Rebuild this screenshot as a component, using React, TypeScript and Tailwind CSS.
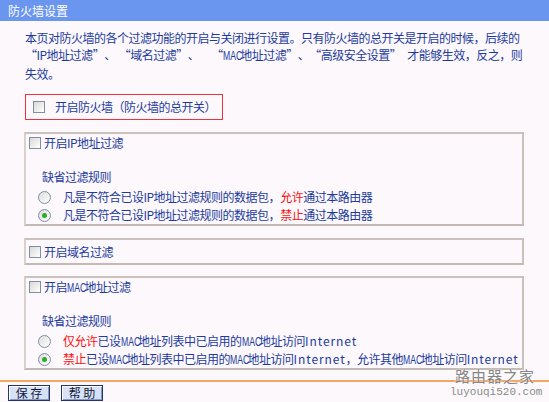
import React from "react";

const FONT = { fontFamily: "'Noto Sans CJK SC', 'Noto Sans', sans-serif" };

function Mac() {
  return (
    <span className="inline-block w-[17.5px] whitespace-nowrap align-baseline tracking-normal">
      <span
        className="inline-block origin-left scale-x-[0.72] text-[12px]"
        style={{ fontFamily: "'Liberation Sans', sans-serif" }}
      >
        MAC
      </span>
    </span>
  );
}

function Inet() {
  return <span className="tracking-[0.9px]">Internet</span>;
}

function QL() {
  return <span className="inline-block w-[11.5px] text-right">“</span>;
}
function QR() {
  return <span className="inline-block w-[11.5px] text-left">”</span>;
}
function Gap({ w }: { w: string }) {
  return <span className={`inline-block ${w}`} />;
}

function Checkbox() {
  return (
    <span className="inline-block w-[12px] h-[12px] shrink-0 border border-[#7f8fa3] bg-gradient-to-br from-[#d9d9d6] to-[#ffffff]" />
  );
}

function Radio({ checked }: { checked?: boolean }) {
  return (
    <span className="relative inline-flex w-[13px] h-[13px] shrink-0 items-center justify-center rounded-full border border-[#7c8fa6] bg-gradient-to-br from-[#dcdcd8] to-[#ffffff]">
      {checked && <span className="w-[5px] h-[5px] rounded-full bg-[#2fa836]" />}
    </span>
  );
}

function Rule({ children, checked }: { children: React.ReactNode; checked?: boolean }) {
  return (
    <div className="flex items-center h-[18px] pl-[12px] whitespace-nowrap">
      <Radio checked={checked} />
      <span className="ml-[12px]">{children}</span>
    </div>
  );
}

function Box({ children }: { children: React.ReactNode }) {
  return (
    <div className="ml-[24px] w-[500px] border-2 border-[#c9c1bc] border-l-[#d8d2ce] border-b-[#c2bab5]">
      {children}
    </div>
  );
}

function Btn({ label }: { label: string }) {
  return (
    <button className="w-[42px] h-[16px] flex items-center justify-center border border-[#24356e] bg-[#d8e2f6] text-[12px] leading-none tracking-normal text-[#101a3c] shadow-[inset_1px_1px_0_#ffffff,inset_-1px_-1px_0_#8a98bc]">
      {label}
    </button>
  );
}

export default function App() {
  return (
    <div
      lang="zh-CN"
      className="relative w-[549px] h-[402px] overflow-hidden bg-[#fcf8fb] text-[12px] tracking-[-0.5px] text-[#1d3b9e]"
      style={FONT}
    >
      <div className="h-[21px] bg-[#6b96ef] flex items-center pl-[8px] text-white text-[12px] tracking-normal">
        防火墙设置
      </div>

      <div className="mt-[8px] pl-[25px] leading-[17px] whitespace-nowrap">
        <div>本页对防火墙的各个过滤功能的开启与关闭进行设置。只有防火墙的总开关是开启的时候，后续的</div>
        <div>
          <QL />IP地址过滤<QR />、<Gap w="w-[3px]" />
          <QL />域名过滤<QR />、<Gap w="w-[12px]" />
          <QL /><Mac />地址过滤<QR />、<QL />高级安全设置<QR />
          <Gap w="w-[6px]" />才能够生效，反之，则
        </div>
        <div>失效。</div>
      </div>

      <div className="mt-[12px] ml-[25px] w-[198px] h-[26px] border border-[#e8343a] flex items-center pl-[7px] whitespace-nowrap">
        <Checkbox />
        <span className="ml-[10px]">开启防火墙（防火墙的总开关）</span>
      </div>

      <div className="mt-[12px]">
        <Box>
          <div className="flex items-center h-[18px] pl-[3px]">
            <Checkbox />
            <span className="ml-[3px]">开启IP地址过滤</span>
          </div>
          <div className="mt-[17px] h-[16px] leading-[16px] pl-[16px]">缺省过滤规则</div>
          <div className="mt-[3px]">
            <Rule>
              凡是不符合已设IP地址过滤规则的数据包，<span className="text-[#ff1010]">允许</span>通过本路由器
            </Rule>
            <Rule checked>
              凡是不符合已设IP地址过滤规则的数据包，<span className="text-[#ff1010]">禁止</span>通过本路由器
            </Rule>
          </div>
        </Box>
      </div>

      <div className="mt-[12px]">
        <Box>
          <div className="flex items-center h-[23px] pl-[3px]">
            <Checkbox />
            <span className="ml-[3px]">开启域名过滤</span>
          </div>
        </Box>
      </div>

      <div className="mt-[11px]">
        <Box>
          <div className="flex items-center h-[18px] pl-[3px]">
            <Checkbox />
            <span className="ml-[3px]">
              开启<Mac />地址过滤
            </span>
          </div>
          <div className="mt-[17px] h-[16px] leading-[16px] pl-[16px]">缺省过滤规则</div>
          <div className="mt-[3px]">
            <Rule>
              <span className="text-[#ff1010]">仅允许</span>已设<Mac />地址列表中已启用的<Mac />地址访问<Inet />
            </Rule>
            <Rule checked>
              <span className="text-[#ff1010]">禁止</span>已设<Mac />地址列表中已启用的<Mac />地址访问<Inet />，允许其他<Mac />地址访问<Inet />
            </Rule>
          </div>
        </Box>
      </div>

      <div className="mt-[10px] h-[2px] bg-[#f5a55e]" />

      <div className="mt-[3px] ml-[8px] flex gap-[11px]">
        <Btn label="保 存" />
        <Btn label="帮 助" />
      </div>

      <div className="absolute left-[455px] top-[368px] text-[15px] leading-[15px] tracking-[1px] text-[#858585] [text-shadow:0_0_2px_#ffffff]">
        路由器之家
      </div>
      <div
        className="absolute left-[450px] top-[385px] text-[11px] leading-[15px] tracking-normal text-[#8a8a8a] [text-shadow:0_0_2px_#ffffff]"
        style={{ fontFamily: "'Liberation Mono', monospace" }}
      >
        luyouqi520.com
      </div>
    </div>
  );
}
